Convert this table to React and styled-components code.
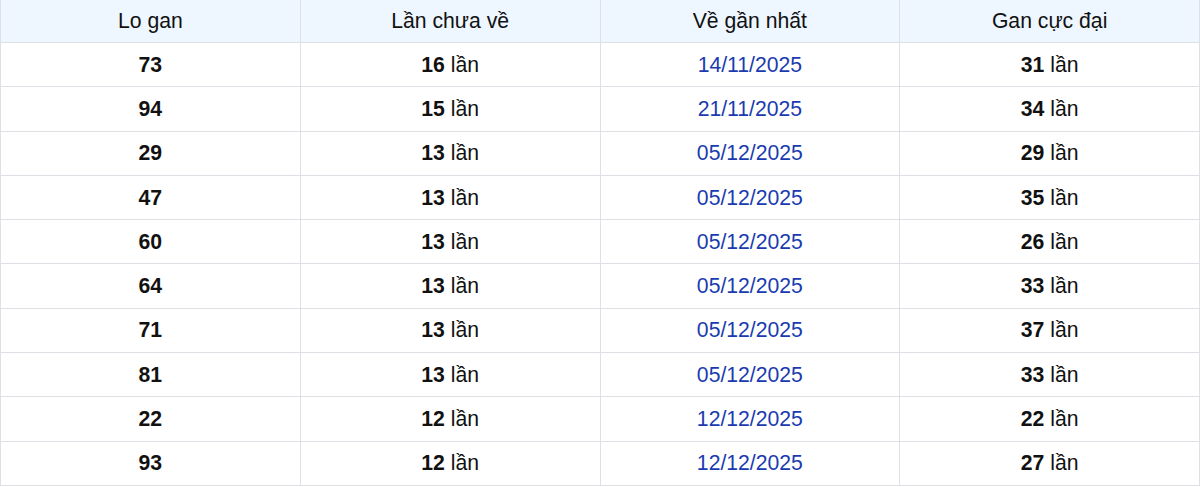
import React from "react";
import styled, { createGlobalStyle } from "styled-components";

const Global = createGlobalStyle`
  html, body { margin: 0; padding: 0; background: #fff; }
  body { font-family: "Liberation Sans", Arial, sans-serif; }
`;

const Table = styled.table`
  width: 1200px;
  border-collapse: collapse;
  table-layout: fixed;
  font-family: "Liberation Sans", Arial, sans-serif;
  font-size: 21.2px;
  color: #111;
`;

const HeadCell = styled.th`
  height: 42px;
  padding: 0;
  background: #eef6ff;
  font-weight: 400;
  text-align: center;
  vertical-align: middle;
  border: 1px solid #dfdfe6;
  border-top: none;
`;

const Cell = styled.td`
  height: 43.3px;
  padding: 0;
  text-align: center;
  vertical-align: middle;
  border: 1px solid #dfdfe6;
  color: ${(p) => (p.$blue ? "#1a3bb0" : "#111")};
`;

const Num = styled.b`
  font-weight: 700;
`;

const rows = [
  ["73", "16", "14/11/2025", "31"],
  ["94", "15", "21/11/2025", "34"],
  ["29", "13", "05/12/2025", "29"],
  ["47", "13", "05/12/2025", "35"],
  ["60", "13", "05/12/2025", "26"],
  ["64", "13", "05/12/2025", "33"],
  ["71", "13", "05/12/2025", "37"],
  ["81", "13", "05/12/2025", "33"],
  ["22", "12", "12/12/2025", "22"],
  ["93", "12", "12/12/2025", "27"],
];

export default function App() {
  return (
    <>
      <Global />
      <Table>
        <thead>
          <tr>
            <HeadCell>Lo gan</HeadCell>
            <HeadCell>Lần chưa về</HeadCell>
            <HeadCell>Về gần nhất</HeadCell>
            <HeadCell>Gan cực đại</HeadCell>
          </tr>
        </thead>
        <tbody>
          {rows.map((r) => (
            <tr key={r[0]}>
              <Cell><Num>{r[0]}</Num></Cell>
              <Cell><Num>{r[1]}</Num> lần</Cell>
              <Cell $blue>{r[2]}</Cell>
              <Cell><Num>{r[3]}</Num> lần</Cell>
            </tr>
          ))}
        </tbody>
      </Table>
    </>
  );
}
